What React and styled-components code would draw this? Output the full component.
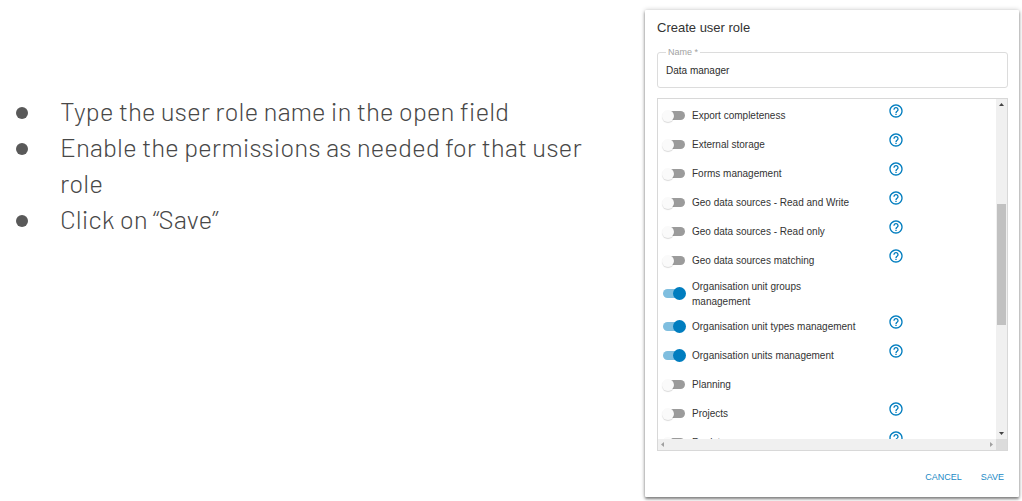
import React, { useState } from "react";
import styled, { createGlobalStyle } from "styled-components";
import { MdHelpOutline } from "react-icons/md";

const GlobalStyle = createGlobalStyle`
  * { box-sizing: border-box; }
  body { margin: 0; background: #fff; font-family: "Liberation Sans", Arial, sans-serif; }
`;

const Slide = styled.main`
  display: grid;
  grid-template-columns: 645fr 374fr;
  align-items: start;
  padding: 10px 3px 4px 0;
`;

const Steps = styled.ul`
  margin: 0;
  padding: 83px 52px 0 16px;
  list-style: none;
  font-family: Barlow, Roboto, sans-serif;
  font-size: 26px;
  font-weight: 300;
  line-height: 36px;
  color: #484848;
`;

const Step = styled.li`
  display: grid;
  grid-template-columns: 12px 1fr;
  column-gap: 32px;

  &::before {
    content: "";
    width: 12px;
    height: 12px;
    margin-top: 14px;
    border-radius: 50%;
    background: #595959;
  }
`;

const Dialog = styled.section`
  padding: 8px 11px 10px 12px;
  background: #fff;
  border-radius: 1px;
  box-shadow: 0 2px 3px rgba(0, 0, 0, 0.45), 0 0 5px rgba(0, 0, 0, 0.22);
`;

const Title = styled.h1`
  margin: 0;
  font-size: 13px;
  font-weight: 400;
  line-height: 20px;
  color: #333;
`;

const Field = styled.fieldset`
  min-width: 0;
  height: 41px;
  margin: 9px 0 10px;
  padding: 0 8px;
  border: 1px solid #dcdcdc;
  border-radius: 3px;
`;

const Legend = styled.legend`
  padding: 0 2px;
  font-size: 9px;
  line-height: 11px;
  color: #a2a2a2;
`;

const NameInput = styled.input`
  display: block;
  width: 100%;
  height: 24px;
  padding: 0;
  border: 0;
  outline: 0;
  background: transparent;
  font-family: inherit;
  font-size: 10px;
  color: #2c2c2c;
`;

const ListFrame = styled.div`
  display: grid;
  grid-template-columns: 1fr 11px;
  grid-template-rows: 340px 11px;
  border: 1px solid #d8d8d8;
`;

const Permissions = styled.ul`
  margin: 0;
  padding: 2px 0 0 4px;
  overflow: hidden;
  list-style: none;
`;

const PermissionRow = styled.li`
  display: grid;
  grid-template-columns: 198px 16px;
  column-gap: 28px;
  align-items: center;
  height: ${(p) => (p.$tall ? 37 : 29)}px;
`;

const PermissionLabel = styled.label`
  display: grid;
  grid-template-columns: 24px 1fr;
  column-gap: 6px;
  align-items: center;
  font-size: 10px;
  line-height: 15px;
  color: #333;
`;

const Switch = styled.input`
  appearance: none;
  display: flex;
  align-items: center;
  width: 24px;
  height: 13px;
  margin: 0;

  &::before {
    content: "";
    width: 20px;
    height: 9px;
    margin-left: ${(p) => (p.checked ? 1 : 3)}px;
    border-radius: 5px;
    background: ${(p) => (p.checked ? "#7fbedf" : "#9b9b9b")};
  }

  &::after {
    content: "";
    width: ${(p) => (p.checked ? 13 : 12)}px;
    height: ${(p) => (p.checked ? 13 : 12)}px;
    margin-left: ${(p) => (p.checked ? -9 : -23)}px;
    flex: none;
    border-radius: 50%;
    background: ${(p) => (p.checked ? "#007dbf" : "#fafafa")};
    box-shadow: ${(p) => (p.checked ? "none" : "0 1px 1px rgba(0, 0, 0, 0.15)")};
  }
`;

const HelpButton = styled.button`
  display: flex;
  width: 16px;
  height: 16px;
  margin-bottom: 9px;
  padding: 0;
  border: 0;
  background: none;
  color: #007dbf;
  font-size: 16px;
`;

const Scrollbar = styled.div`
  display: flex;
  flex-direction: ${(p) => (p.$horizontal ? "row" : "column")};
  align-items: center;
  justify-content: space-between;
  padding: ${(p) => (p.$horizontal ? "0 3px" : "4px 0")};
  background: #f0f0f0;
`;

const Arrow = styled.svg`
  display: block;
  fill: ${(p) => (p.$dim ? "#a0a0a0" : "#444")};
`;

const ThumbTrack = styled.div`
  flex: 1;
  padding-top: 98px;
`;

const Thumb = styled.div`
  width: 9px;
  height: 121px;
  background: #c1c1c1;
`;

const Corner = styled.div`
  background: #dcdcdc;
`;

const Actions = styled.footer`
  display: flex;
  justify-content: flex-end;
  gap: 11px;
  margin-top: 15px;
`;

const ActionButton = styled.button`
  height: 21px;
  padding: 0 4px;
  border: 0;
  background: none;
  font: 9px "Liberation Sans", Arial, sans-serif;
  text-transform: uppercase;
  color: #1b8ac6;
`;

const steps = [
  "Type the user role name in the open field",
  "Enable the permissions as needed for that user role",
  "Click on “Save”",
];

const permissions = [
  { name: "Export completeness", help: true },
  { name: "External storage", help: true },
  { name: "Forms management", help: true },
  { name: "Geo data sources - Read and Write", help: true },
  { name: "Geo data sources - Read only", help: true },
  { name: "Geo data sources matching", help: true },
  { name: "Organisation unit groups management", on: true, tall: true },
  { name: "Organisation unit types management", on: true, help: true },
  { name: "Organisation units management", on: true, help: true },
  { name: "Planning" },
  { name: "Projects", help: true },
  { name: "Registry", help: true },
];

function Permission({ name, on = false, help, tall }) {
  const [checked, setChecked] = useState(on);
  return (
    <PermissionRow $tall={tall}>
      <PermissionLabel>
        <Switch type="checkbox" checked={checked} onChange={() => setChecked(!checked)} />
        <span>{name}</span>
      </PermissionLabel>
      {help && (
        <HelpButton type="button" aria-label={`Help: ${name}`}>
          <MdHelpOutline />
        </HelpButton>
      )}
    </PermissionRow>
  );
}

export default function App() {
  const [roleName, setRoleName] = useState("Data manager");
  return (
    <>
      <GlobalStyle />
      <Slide>
        <Steps>
          {steps.map((step) => (
            <Step key={step}>{step}</Step>
          ))}
        </Steps>
        <Dialog>
          <Title>Create user role</Title>
          <Field>
            <Legend>
              <label htmlFor="role-name">Name *</label>
            </Legend>
            <NameInput id="role-name" value={roleName} onChange={(e) => setRoleName(e.target.value)} />
          </Field>
          <ListFrame>
            <Permissions>
              {permissions.map((p) => (
                <Permission key={p.name} {...p} />
              ))}
            </Permissions>
            <Scrollbar>
              <Arrow width="5" height="3"><path d="M0 3 2.5 0 5 3z" /></Arrow>
              <ThumbTrack>
                <Thumb />
              </ThumbTrack>
              <Arrow width="5" height="3"><path d="M0 0h5L2.5 3z" /></Arrow>
            </Scrollbar>
            <Scrollbar $horizontal>
              <Arrow $dim width="3" height="5"><path d="M3 0v5L0 2.5z" /></Arrow>
              <Arrow $dim width="3" height="5"><path d="M0 0v5l3-2.5z" /></Arrow>
            </Scrollbar>
            <Corner />
          </ListFrame>
          <Actions>
            <ActionButton type="button">Cancel</ActionButton>
            <ActionButton type="button">Save</ActionButton>
          </Actions>
        </Dialog>
      </Slide>
    </>
  );
}
